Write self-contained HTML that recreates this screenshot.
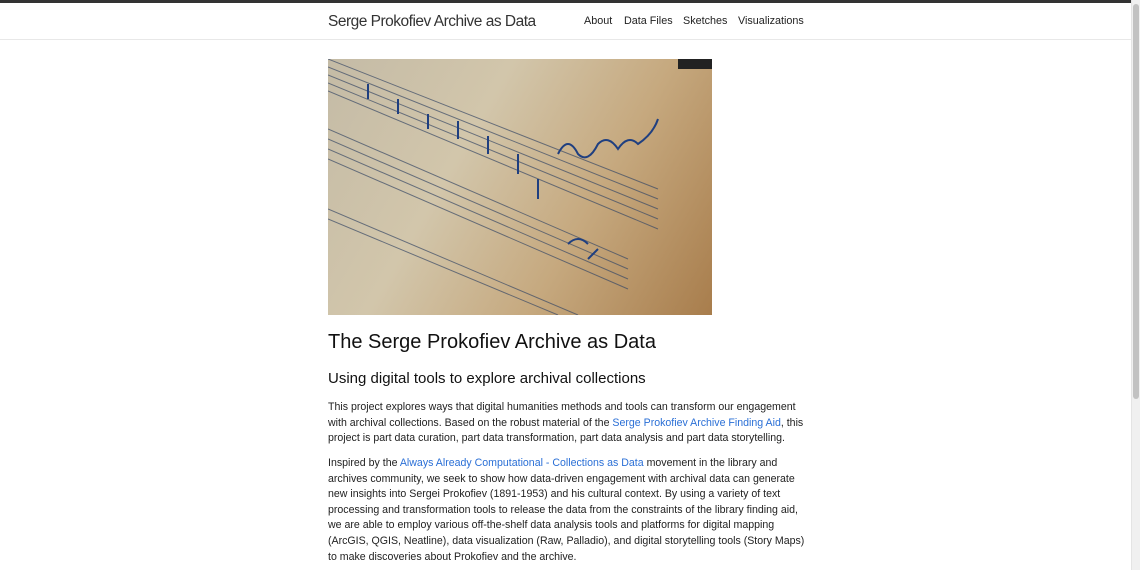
<!DOCTYPE html>
<html><head><meta charset="utf-8"><style>
*{margin:0;padding:0;box-sizing:border-box}
body{width:1140px;height:570px;overflow:hidden;background:#fff;font-family:"Liberation Sans",sans-serif;color:#222;position:relative}
.top{position:absolute;left:0;top:0;width:1140px;height:3px;background:#333}
.hdr{position:absolute;left:0;top:3px;width:1131px;height:37px;border-bottom:1px solid #e8e8e8}
.brand{position:absolute;left:328px;top:10px;font-size:15.5px;color:#333;letter-spacing:-0.5px}
.nav{position:absolute;top:12px;font-size:10.8px;color:#222}
.sb{position:absolute;right:0;top:0;width:9px;height:570px;background:#f0f0f0;border-left:1px solid #e4e4e4}
.thumb{position:absolute;right:1px;top:4px;width:6px;height:395px;background:#c2c2c2;border-radius:3px}
.img{position:absolute;left:328px;top:59px;width:384px;height:256px;background:linear-gradient(120deg,#c4bba6 0%,#d2c6ab 35%,#c6a97f 65%,#a87d4c 100%);overflow:hidden}
h1{position:absolute;left:328px;top:331px;font-size:20px;font-weight:normal;color:#111}
h2{position:absolute;left:328px;top:370px;font-size:15px;font-weight:normal;color:#111}
p{position:absolute;left:328px;width:480px;font-size:10.6px;line-height:15.6px;color:#222}
a{color:#2a6fd6;text-decoration:none}
</style></head><body>
<div class="top"></div>
<div class="hdr">
<div class="brand">Serge Prokofiev Archive as Data</div>
<div class="nav" style="left:584px">About</div>
<div class="nav" style="left:624px">Data Files</div>
<div class="nav" style="left:683px">Sketches</div>
<div class="nav" style="left:738px">Visualizations</div>
</div>
<div class="img"><svg width="384" height="256" viewBox="0 0 384 256">
<g stroke="#3a4a66" stroke-width="1" fill="none" opacity="0.7">
<path d="M0 0 L330 130"/><path d="M0 8 L330 140"/><path d="M0 16 L330 150"/><path d="M0 24 L330 160"/><path d="M0 32 L330 170"/>
<path d="M0 70 L300 200"/><path d="M0 80 L300 210"/><path d="M0 90 L300 220"/><path d="M0 100 L300 230"/>
<path d="M0 150 L250 256"/><path d="M0 160 L230 256"/>
</g>
<g stroke="#1f3f80" stroke-width="2" fill="none">
<path d="M230 95 q10 -20 20 0 q10 10 20 -10 q10 -10 20 5 q10 -15 20 -5 q15 -10 20 -25"/>
<path d="M40 40 l0 -15 M70 55 l0 -15 M100 70 l0 -15 M130 80 l0 -18 M160 95 l0 -18 M190 115 l0 -20 M210 140 l0 -20 M240 185 q10 -10 20 0 M260 200 l10 -10"/>
</g>
<rect x="350" y="0" width="34" height="10" fill="#222"/>
</svg></div>
<h1>The Serge Prokofiev Archive as Data</h1>
<h2>Using digital tools to explore archival collections</h2>
<p style="top:400px">This project explores ways that digital humanities methods and tools can transform our engagement with archival collections. Based on the robust material of the <a>Serge Prokofiev Archive Finding Aid</a>, this project is part data curation, part data transformation, part data analysis and part data storytelling.</p>
<p style="top:456px">Inspired by the <a>Always Already Computational - Collections as Data</a> movement in the library and archives community, we seek to show how data-driven engagement with archival data can generate new insights into Sergei Prokofiev (1891-1953) and his cultural context. By using a variety of text processing and transformation tools to release the data from the constraints of the library finding aid, we are able to employ various off-the-shelf data analysis tools and platforms for digital mapping (ArcGIS, QGIS, Neatline), data visualization (Raw, Palladio), and digital storytelling tools (Story Maps) to make discoveries about Prokofiev and the archive.</p>
<div class="sb"><div class="thumb"></div></div>
</body></html>
